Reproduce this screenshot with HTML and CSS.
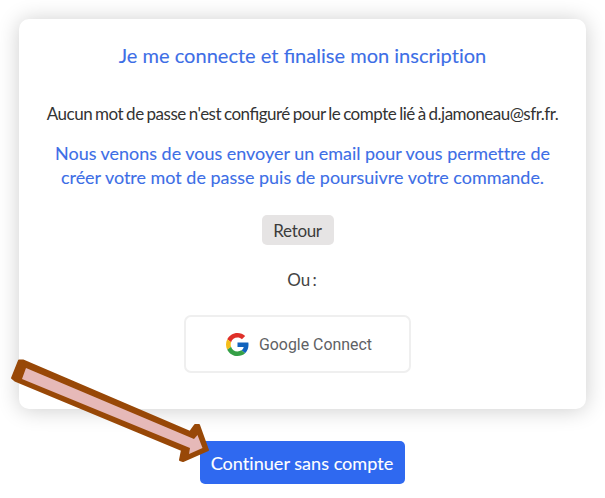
FILE: index.html
```html
<!DOCTYPE html>
<html lang="fr">
<head>
<meta charset="utf-8">
<title>Connexion</title>
<link rel="stylesheet" href="styles.css">
</head>
<body>
<main class="page">
  <section class="card">
    <h1 class="title">Je me connecte et <span class="liga">fi</span>nalise mon inscription</h1>
    <p class="notice">Aucun mot de passe n'est configuré pour le compte lié à d.jamoneau@sfr.fr.</p>
    <p class="info">Nous venons de vous envoyer un email pour vous permettre de<br>créer votre mot de passe puis de poursuivre votre commande.</p>
    <div class="actions">
      <button class="back">Retour</button>
      <p class="or">Ou :</p>
      <button class="google">
        <svg class="logo" viewBox="0 0 48 48" aria-hidden="true">
          <path fill="#df3029" d="M24 9.500c3.540 0 6.710 1.220 9.210 3.600l6.850-6.850C35.900 2.380 30.470 0 24 0 14.620 0 6.510 5.380 2.560 13.220l7.980 6.190C12.430 13.720 17.740 9.500 24 9.500z"/>
          <path fill="#1263bd" d="M46.980 24.550c0-1.570-.15-3.090-.38-4.550H24v9.020h12.940c-.58 2.960-2.260 5.480-4.780 7.180l7.730 6c4.510-4.180 7.090-10.360 7.090-17.650z"/>
          <path fill="#f5bd18" d="M10.530 28.590c-.48-1.450-.76-2.990-.76-4.590s.27-3.140.76-4.590l-7.980-6.190C.92 16.460 0 20.120 0 24s.92 7.540 2.560 10.780l7.970-6.190z"/>
          <path fill="#35a046" d="M24 48c6.480 0 11.930-2.130 15.890-5.810l-7.730-6c-2.150 1.450-4.920 2.300-8.160 2.300-6.260 0-11.570-4.220-13.470-9.910l-7.980 6.190C6.510 42.620 14.620 48 24 48z"/>
        </svg>
        <span>Google Connect</span>
      </button>
    </div>
  </section>
  <button class="continue">Continuer sans compte</button>
  <svg class="arrow" viewBox="0 0 220 130" aria-hidden="true">
    <path class="arrow-edge" d="M19 19.500 L12 37 L15 39.500 L182 109 L180 119 L183 120 L208 109 L199 84 L195 84 L190 91 L23 19.500 Z"/>
    <path class="arrow-body" d="M26 27 L22 38 L190 107 L189 113 L202.500 107 L197.500 94 L194 98 Z"/>
  </svg>
</main>
</body>
</html>
```
FILE: styles.css
```css
* { box-sizing: border-box; }
body { margin: 0; background: #fff; font-family: Lato, sans-serif; overflow: hidden; font-variant-ligatures: none; }
button { font: inherit; font-variant-ligatures: none; padding: 0; border: 0; }
.page { position: relative; height: 498px; padding-top: 19px; display: flex; flex-direction: column; align-items: center; }
.card {
  width: 567px; height: 390px; padding-top: 22px; border-radius: 10px; background: #fff;
  box-shadow: 0 1px 22px rgba(0, 0, 0, .2);
  display: flex; flex-direction: column; align-items: center;
  white-space: nowrap;
}
.title { margin: 0; font-size: 20.05px; line-height: 28px; font-weight: 400; color: #3d6ee6; -webkit-text-stroke: .1px; }
.liga { font-variant-ligatures: common-ligatures; }
.notice { margin: 33px 0 0; font-size: 17px; line-height: 24px; color: #333; letter-spacing: -.5px; word-spacing: -.9px; font-feature-settings: "liga" 1; }
.info { margin: 15px 0 0; font-size: 17.950px; line-height: 24px; color: #3d6ee6; text-align: center; -webkit-text-stroke: .1px; }
.actions { display: flex; flex-direction: column; align-items: center; width: 227px; margin: 26px 10px 0 0; }
.back { width: 72px; height: 30px; border-radius: 5px; background: #e6e4e4; color: #3c3c3c; font-size: 17px; letter-spacing: -.35px; }
.or { margin: 23px 0 0 9px; font-size: 17px; line-height: 24px; color: #444; word-spacing: -2px; }
.google {
  width: 227px; height: 58px; margin-top: 23px; padding-left: 3px; border: 2px solid #efefef; border-radius: 7px; background: #fff;
  display: flex; align-items: center; justify-content: center; gap: 10px;
  font: 15.9px Roboto, sans-serif; color: #606164;
}
.logo { width: 23px; height: 23px; }
.continue { width: 205px; height: 43px; margin: 32px 0 0 -1px; border-radius: 5px; background: #2f69f0; color: #fff; font-size: 18.1px; -webkit-text-stroke: .1px; }
.arrow { position: absolute; left: 0; top: 341px; width: 220px; height: 130px; }
.arrow-edge { fill: #984807; stroke: #984807; stroke-width: 2; stroke-linejoin: round; }
.arrow-body { fill: #e6b9b8; }
```
